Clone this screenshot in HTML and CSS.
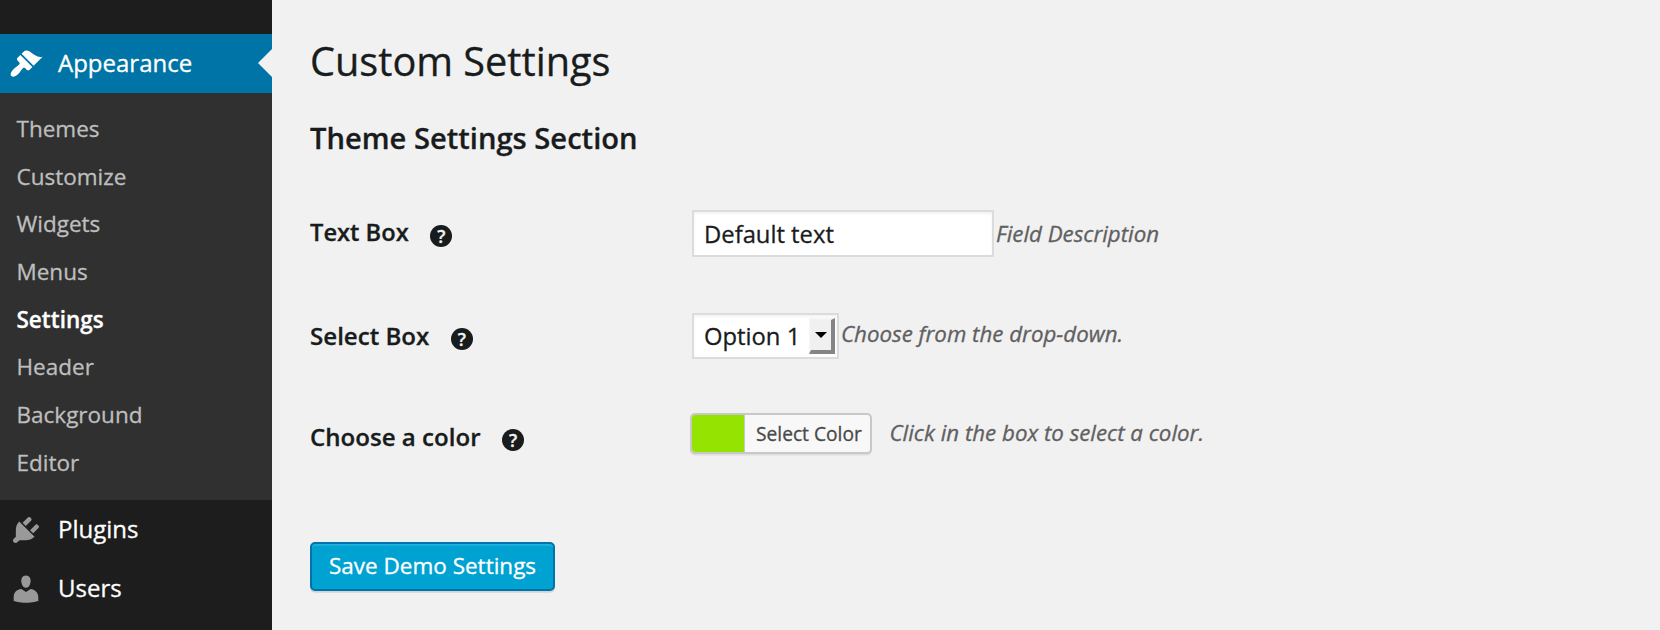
FILE: index.html
```html
<!DOCTYPE html>
<html lang="en">
<head>
<meta charset="utf-8">
<title>Custom Settings</title>
<link rel="stylesheet" href="styles.css">
</head>
<body>
<div class="admin">
  <nav class="menu">
    <a class="menu-item current">
      <svg class="icon" viewBox="0 0 20 20"><path d="M14.48 11.06L7.41 3.99l1.5-1.5c.5-.56 2.3-.47 3.51.32 1.21.8 1.43 1.28 2.91 2.1 1.18.64 2.45 1.26 4.45.85zm-.71.71L6.7 4.7 4.93 6.47c-.39.39-.39 1.02 0 1.41l1.06 1.06c.39.39.39 1.03 0 1.42-.6.6-1.43 1.11-2.21 1.69-.35.26-.7.53-1.01.84C1.43 14.23.4 16.08 1.4 17.07c.99 1 2.84-.03 4.18-1.36.31-.31.58-.66.85-1.02.57-.78 1.08-1.61 1.69-2.21.39-.39 1.02-.39 1.41 0l1.06 1.06c.39.39 1.02.39 1.41 0z"/></svg>
      <span>Appearance</span>
    </a>
    <div class="submenu">
      <a>Themes</a>
      <a>Customize</a>
      <a>Widgets</a>
      <a>Menus</a>
      <a class="active">Settings</a>
      <a>Header</a>
      <a>Background</a>
      <a>Editor</a>
    </div>
    <a class="menu-item">
      <svg class="icon" viewBox="0 0 20 20"><path d="M13.11 4.36L9.87 7.6 8 5.73l3.24-3.24c.35-.34 1.05-.2 1.56.32.52.51.66 1.21.31 1.55zm-8 1.77l.91-1.12 9.01 9.01-1.19.84c-.71.71-2.63 1.16-3.82 1.16H6.14L4.9 17.26c-.59.59-1.54.59-2.12 0-.59-.58-.59-1.53 0-2.12l1.24-1.24v-3.88c0-1.13.4-3.19 1.09-3.89zm7.26 3.97l3.24-3.24c.34-.35 1.04-.21 1.55.31.52.51.66 1.21.31 1.55l-3.24 3.25z"/></svg>
      <span>Plugins</span>
    </a>
    <a class="menu-item">
      <svg class="icon" viewBox="0 0 20 20"><path d="M10 9.25c-2.27 0-2.73-3.44-2.73-3.44C7 4.02 7.82 2 9.97 2c2.16 0 2.98 2.02 2.71 3.81 0 0-.41 3.44-2.68 3.44zm0 2.57L12.72 10c2.39 0 4.52 2.33 4.52 4.53v2.49s-3.65 1.13-7.24 1.13c-3.65 0-7.24-1.13-7.24-1.13v-2.49c0-2.25 1.94-4.48 4.47-4.48z"/></svg>
      <span>Users</span>
    </a>
  </nav>
  <main class="content">
    <h1 class="title">Custom Settings</h1>
    <h2 class="section">Theme Settings Section</h2>
    <div class="row row-text">
      <div class="label"><span>Text Box</span><span class="help">?</span></div>
      <div class="field"><div class="input">Default text</div><span class="desc">Field Description</span></div>
    </div>
    <div class="row row-select">
      <div class="label"><span>Select Box</span><span class="help">?</span></div>
      <div class="field"><div class="select"><span>Option 1</span><span class="arrow"></span></div><span class="desc">Choose from the drop-down.</span></div>
    </div>
    <div class="row row-color">
      <div class="label"><span>Choose a color</span><span class="help">?</span></div>
      <div class="field"><div class="picker"><span class="swatch"></span><span class="picker-text">Select Color</span></div><span class="desc">Click in the box to select a color.</span></div>
    </div>
    <div class="save">Save Demo Settings</div>
  </main>
</div>
</body>
</html>
```
FILE: styles.css
```css
* { box-sizing: border-box; }
body {
  margin: 0;
  height: 630px;
  overflow: hidden;
  background: #f1f1f1;
  color: #191c1c;
  font-family: "Open Sans", sans-serif;
  -webkit-text-stroke: .3px currentColor;
}
.admin { display: flex; height: 630px; }
.menu {
  flex: none;
  width: 272px;
  padding-top: 33.5px;
  background: #1d1d1d;
}
.menu-item {
  display: flex;
  align-items: center;
  gap: 15px;
  height: 59px;
  padding-left: 9px;
  color: #fff;
  font-size: 24px;
  line-height: 57px;
}
.menu-item span { padding-bottom: 2px; }
.icon { width: 34px; height: 34px; fill: #999; }
.current { position: relative; background: #0074a6; }
.current .icon { fill: #fff; margin-top: 2px; }
.current::after {
  content: "";
  position: absolute;
  right: 0;
  top: 15.5px;
  border: 14px solid transparent;
  border-left-width: 0;
  border-right-color: #f1f1f1;
}
.submenu {
  display: flex;
  flex-direction: column;
  height: 407.5px;
  padding: 12.3px 0 0 16.5px;
  background: #303030;
  color: #bebebe;
  font-size: 22.5px;
  line-height: 47.7px;
}
.submenu .active { color: #fff; font-weight: 600; }
.content { flex: 1; padding: 31px 0 0 38px; }
.title { margin: 0; font-size: 39.7px; font-weight: 400; line-height: 60px; }
.section { margin: 27px 0 0; font-size: 29.15px; font-weight: 600; line-height: 41px; }
.row { display: flex; align-items: flex-start; }
.row-text { height: 103px; margin-top: 51px; }
.row-select { height: 100px; }
.row-color { height: 129px; }
.label {
  display: flex;
  align-items: center;
  width: 382px;
  height: 46px;
  font-size: 24.1px;
  font-weight: 600;
}
.label > span:first-child { padding-bottom: 2px; }
.row-text .label { font-size: 23.7px; }
.row-color .label { height: 48px; }
.help {
  width: 22px;
  height: 22px;
  margin: 6px 0 0 21.5px;
  border-radius: 50%;
  background: #191c1c;
  color: #f1f1f1;
  font-size: 18px;
  font-weight: 600;
  line-height: 22px;
  text-align: center;
}
.field { display: flex; align-items: center; height: 47px; }
.input, .select {
  display: flex;
  align-items: center;
  border: 2px solid #dcdcdc;
  background: #fff;
  box-shadow: inset 0 2px 3px rgba(0, 0, 0, .05);
  font-size: 23.8px;
  padding-left: 10px;
}
.input { width: 302px; height: 47px; }
.select { width: 147px; height: 46px; justify-content: space-between; padding-right: 2px; line-height: 32px; }
.row-select .field { height: 45px; }
.select > span:first-child { padding-top: 1px; }
.arrow {
  display: flex;
  justify-content: center;
  align-items: center;
  width: 26px;
  height: 36px;
  border: solid;
  border-width: 2px 4px 4px 2px;
  border-color: #f4f4f4 #858585 #858585 #f4f4f4;
  background: #f0f0f0;
}
.arrow::after {
  content: "";
  border: 6px solid transparent;
  border-top-color: #000;
  border-bottom-width: 0;
}
.desc { margin-left: 2px; color: #606060; font-size: 22.3px; font-style: italic; white-space: nowrap; }
.row-select .desc { padding-bottom: 4px; }
.row-color .field { height: 41px; margin-left: -2px; }
.picker {
  display: flex;
  width: 182px;
  height: 41px;
  border: 2px solid #c8c8c8;
  border-radius: 5px;
  overflow: hidden;
  background: #f8f8f8;
  box-shadow: 0 1.5px 0 rgba(0, 0, 0, .08);
}
.swatch { width: 53px; background: #95e300; border-right: 1px solid #c8c8c8; }
.picker-text { margin-left: 11px; color: #494949; font-size: 19.2px; line-height: 37px; }
.row-color .desc { margin-left: 17.5px; padding-bottom: 2px; }
.save {
  width: 245px;
  height: 49px;
  border: 2px solid #0073aa;
  border-radius: 5px;
  background: #00a2d2;
  box-shadow: inset 0 1.7px 0 #1fb0dc, 0 1.7px 0 rgba(0, 0, 0, .12);
  color: #fff;
  font-size: 22.5px;
  line-height: 43px;
  text-align: center;
}
```
